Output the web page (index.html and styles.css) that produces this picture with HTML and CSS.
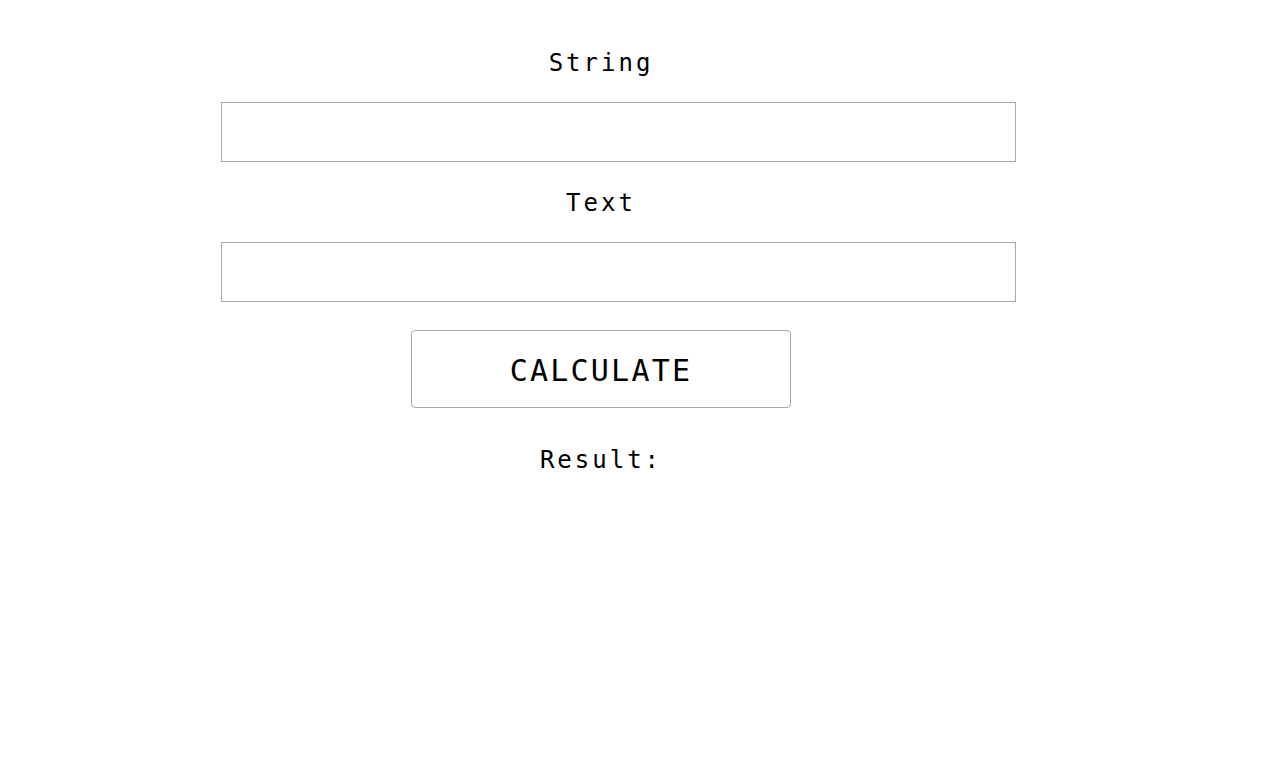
FILE: index.html
```html
<!DOCTYPE html>
<html lang="en">
<head>
<meta charset="utf-8">
<title>Calculator</title>
<link rel="stylesheet" href="styles.css">
</head>
<body>
<main class="form">
  <label class="label label-first" for="str">String</label>
  <input class="field" id="str" type="text">
  <label class="label" for="txt">Text</label>
  <input class="field" id="txt" type="text">
  <button class="btn" type="button">CALCULATE</button>
  <p class="result">Result:</p>
</main>
</body>
</html>
```
FILE: styles.css
```css
html, body {
  margin: 0;
  padding: 0;
  background: #ffffff;
}

body {
  font-family: "DejaVu Sans Mono", "Liberation Mono", monospace;
  color: #000;
}

.form {
  width: 760px;
  margin-left: 221px;
  padding-top: 41px;
  display: flex;
  flex-direction: column;
  align-items: center;
}

.label {
  display: block;
  box-sizing: border-box;
  height: 40px;
  line-height: 40px;
  padding-top: 2px;
  font-size: 24px;
  letter-spacing: 3px;
  margin: 19px 0 21px;
  text-align: center;
}

.label-first {
  margin-top: 0;
}

.field {
  align-self: flex-start;
  box-sizing: border-box;
  width: 795px;
  height: 60px;
  margin: 0;
  padding: 0 16px;
  border: 1px solid #a9a9a9;
  border-radius: 0;
  background: #fff;
  font-family: inherit;
  font-size: 20px;
  outline: none;
}

.btn {
  box-sizing: border-box;
  width: 380px;
  height: 78px;
  margin-top: 28px;
  border: 1px solid #a9a9a9;
  border-radius: 4px;
  background: #fff;
  font-family: inherit;
  font-size: 30px;
  letter-spacing: 2.2px;
  color: #000;
  padding: 2px 0 0;
  cursor: pointer;
}

.result {
  margin: 30px 0 0;
  box-sizing: border-box;
  height: 40px;
  line-height: 40px;
  padding-top: 2px;
  font-size: 24px;
  letter-spacing: 3px;
  text-align: center;
}
```
